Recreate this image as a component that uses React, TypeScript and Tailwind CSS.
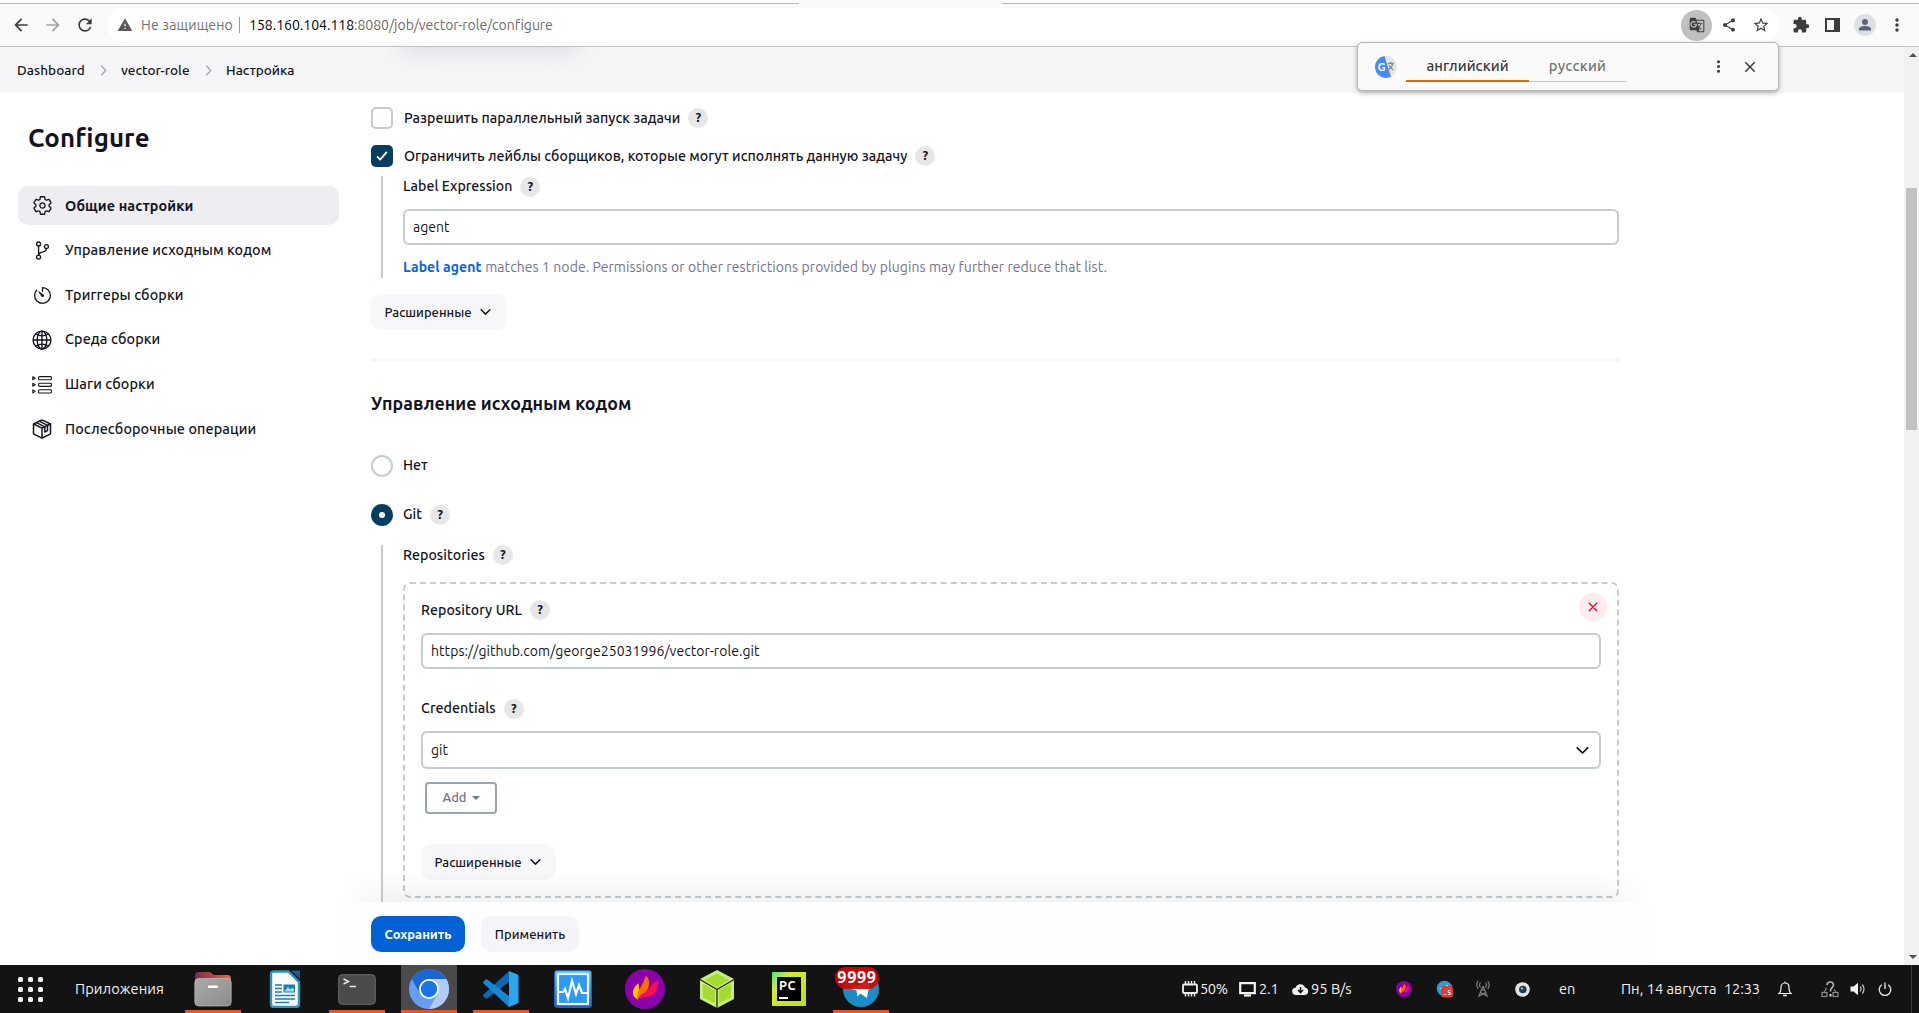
import type { ReactNode } from "react";
import {
  MdArrowBack,
  MdArrowForward,
  MdClose,
  MdExtension,
  MdGTranslate,
  MdMoreVert,
  MdRefresh,
  MdShare,
  MdStarBorder,
  MdWarning,
} from "react-icons/md";
import { IoGitBranchOutline, IoGlobeOutline, IoSettingsOutline, IoTimerOutline } from "react-icons/io5";

/* ---------- browser chrome ---------- */

function BrowserToolbar() {
  return (
    <header className="h-[47px] shrink-0 bg-[#fafafa] border-b border-[#c3c3c3] flex flex-col">
      <div className="h-1 flex">
        <div className="w-[799px] border-b border-[#b9b9b9]" />
        <div className="w-[203px]" />
        <div className="flex-1 border-b border-[#b9b9b9]" />
      </div>
      <div className="flex-1 flex items-center text-[14px]">
        <div className="w-[107px] pl-[11px] flex items-center gap-[12px] text-[#3c3c3c]">
          <MdArrowBack size={20} />
          <MdArrowForward size={20} className="text-[#a3a3a3]" />
          <MdRefresh size={20} />
        </div>
        <div className="w-[1672px] h-[34px] rounded-full bg-white flex items-center pl-[10px] pr-[4px]">
          <MdWarning size={16} className="text-[#5a5a5a]" />
          <span className="ml-[8px] text-[#707070] text-[14px] tracking-[0.19px]">Не защищено</span>
          <span className="ml-[6px] mr-[9px] w-px h-[16px] bg-[#9a9a9a]" />
          <span className="text-black">158.160.104.118</span>
          <span className="text-[#6b6b6b] tracking-[-0.03px]">:8080/job/vector-role/configure</span>
          <div className="ml-auto flex items-center text-[#3f3f3f]">
            <span className="size-[31px] rounded-full bg-[#c0c0c0] grid place-items-center">
              <MdGTranslate size={16} />
            </span>
            <MdShare size={16} className="ml-[9px]" />
            <MdStarBorder size={18} className="ml-[15px] mr-[5px]" />
          </div>
        </div>
        <div className="ml-[13px] flex items-center text-[#3c3c3c]">
          <MdExtension size={18} />
          <span className="ml-[15px] w-[15px] h-[14px] border-2 border-r-[6px] border-[#3c3c3c]" />
          <span className="ml-[14px] size-[22px] rounded-full bg-[#dde1e6] grid place-items-center">
            <svg viewBox="0 0 14 14" className="size-[14px]" fill="#5a6478">
              <circle cx="7" cy="4" r="3" />
              <path d="M1 12.5V11c0-2 3-3 6-3s6 1 6 3v1.500z" />
            </svg>
          </span>
          <MdMoreVert size={20} className="ml-[11px]" />
        </div>
      </div>
    </header>
  );
}

function TranslatePopup() {
  return (
    <div className="absolute left-[1357px] top-[42px] w-[422px] h-[49px] rounded-[5px] bg-[#fafafa] border border-[#b5b5b5] shadow-[0_2px_5px_rgba(0,0,0,0.3)] z-20 flex items-center pl-[17px] text-[14.800px] font-medium">
      <svg viewBox="0 0 22 22" className="size-[22px]">
        <circle cx="11" cy="11" r="11" fill="#e6e6e6" />
        <path d="M9.500 0.100a11 11 0 0 0 1.500 21.900l5-.9z" fill="#4a8af4" />
        <text x="2.800" y="14.800" fontSize="10.500" fontWeight="700" fill="#fff" fontFamily="Lato">G</text>
        <path d="M12.800 7.500h6M15.800 6v1.500M18 7.500c-.6 3-2.500 4.800-4.200 6M14.200 9.500c.8 2 2.400 3.400 4.200 4.500" fill="none" stroke="#7f9090" strokeWidth="1.300" />
      </svg>
      <div className="ml-[9px] w-[123px] h-[29px] mt-[2px] border-b-[2px] border-[#d56e0c] flex items-center justify-center text-[#3a3a3a] tracking-[0.05px]">
        английский
      </div>
      <div className="w-[97px] h-[29px] mt-[2px] pb-px border-b border-[#c4c4c4] flex items-center justify-center text-[#757575] tracking-[0.200px]">
        русский
      </div>
      <MdMoreVert size={19} className="ml-[83px] text-[#3c3c3c]" />
      <MdClose size={18} className="ml-[13px] text-[#3c3c3c]" />
    </div>
  );
}

/* ---------- Jenkins page ---------- */

function Crumb() {
  return (
    <svg viewBox="0 0 6 10" className="w-[7px] h-[11px]" fill="none" stroke="#a5a5b8" strokeWidth="1.300">
      <path d="M1 .7 5 5 1 9.300" />
    </svg>
  );
}

function Breadcrumbs() {
  return (
    <div className="h-[46px] shrink-0 bg-[#f6f6f9] relative flex items-center pl-[17px] text-[13.600px] font-medium overflow-hidden">
      <div className="absolute left-[400px] -top-[24px] w-[180px] h-[28px] rounded-full bg-[#d9d9e0] blur-[12px]" />
      <span className="w-[83px] tracking-[0.05px]">Dashboard</span>
      <Crumb />
      <span className="ml-[14px] w-[84px]">vector-role</span>
      <Crumb />
      <span className="ml-[14px]">Настройка</span>
    </div>
  );
}

function StepsIcon() {
  return (
    <svg viewBox="0 0 20 20" className="size-[20px]" fill="none" stroke="#14141f" strokeWidth="1.100">
      {[3.2, 9.8, 16.4].map((y) => (
        <g key={y}>
          <path d={`M.8 ${y - 1.5}v3l2.400-1.500z`} strokeLinejoin="round" />
          <rect x="6.500" y={y - 1.6} width="13" height="3.200" rx="1.300" />
        </g>
      ))}
    </svg>
  );
}

function PackageIcon() {
  return (
    <svg viewBox="0 0 20 20" className="size-[20px]" fill="none" stroke="#14141f" strokeWidth="1.500" strokeLinejoin="round">
      <path d="M10 .9 18.500 5v9.800L10 19.200 1.500 14.800V5z" />
      <path d="M1.500 5 10 9.200 18.500 5M10 9.200v10" />
      <path d="M4.500 3.700l8.300 4.200v5.200l2.700-1.400V6.300L7.200 2.200" />
    </svg>
  );
}

const NAV: { label: string; icon: ReactNode }[] = [
  { label: "Общие настройки", icon: <IoSettingsOutline size={21} /> },
  { label: "Управление исходным кодом", icon: <IoGitBranchOutline size={21} /> },
  { label: "Триггеры сборки", icon: <IoTimerOutline size={21} /> },
  { label: "Среда сборки", icon: <IoGlobeOutline size={22} /> },
  { label: "Шаги сборки", icon: <StepsIcon /> },
  { label: "Послесборочные операции", icon: <PackageIcon /> },
];

function Sidebar() {
  return (
    <aside className="w-[371px] shrink-0 pl-[18px]">
      <h1 className="mt-[28px] ml-[10px] h-[34px] leading-[34px] text-[25.800px] font-semibold tracking-[0.1px]">Configure</h1>
      <nav className="mt-[31px] flex flex-col gap-[5.800px]">
        {NAV.map((n, i) => (
          <a
            key={n.label}
            className={
              i === 0
                ? "w-[321px] h-[39px] rounded-[10px] bg-[#ededf2] flex items-center pl-[13px] font-semibold text-[14.400px] tracking-[0.1px]"
                : "w-[321px] h-[39px] rounded-[10px] flex items-center pl-[13px] font-medium text-[14.400px] tracking-[0.1px]"
            }
          >
            <span className="w-[22px] mr-[12px] grid place-items-center">{n.icon}</span>
            <span className={i < 3 ? "pt-[2px]" : ""}>{n.label}</span>
          </a>
        ))}
      </nav>
    </aside>
  );
}

function Help() {
  return (
    <span className="ml-[8px] size-[20px] pb-px rounded-full bg-[#e7e7e8] grid place-items-center text-[13px] leading-none font-semibold">
      ?
    </span>
  );
}

function Chevron({ className }: { className: string }) {
  return (
    <svg viewBox="0 0 12 8" className={className} fill="none" stroke="#14141f" strokeWidth="1.600" strokeLinecap="round" strokeLinejoin="round">
      <path d="M1.200 1.500 6 6.300l4.800-4.800" />
    </svg>
  );
}

function AdvancedButton({ className }: { className: string }) {
  return (
    <button className={"w-[135px] h-[36px] rounded-[10px] bg-[#f7f7f9] flex items-center pl-[13.500px] text-[13px] font-medium " + className}>
      <span className="pt-[2px]">Расширенные</span>
      <Chevron className="ml-[9px] w-[11px] h-[8px]" />
    </button>
  );
}

function ConfigForm() {
  return (
    <main className="w-[1248px] text-[14.200px] font-medium flex flex-col">
      <div className="mt-[14px] h-[22px] flex items-center">
        <span className="size-[22px] rounded-[5px] border-2 border-[#c3ccd1]" />
        <span className="ml-[11px] pt-[2px] tracking-[0.04px]">Разрешить параллельный запуск задачи</span>
        <Help />
      </div>
      <div className="mt-[16px] h-[22px] flex items-center">
        <span className="size-[22px] rounded-[5px] bg-[#063e62] grid place-items-center">
          <svg viewBox="0 0 12 12" className="size-[12px]" fill="none" stroke="#fff" strokeWidth="1.800" strokeLinecap="round" strokeLinejoin="round">
            <path d="M1.500 6.800 4.200 9.600 10.400 2.400" />
          </svg>
        </span>
        <span className="ml-[11px] pt-[2px] tracking-[0.04px]">Ограничить лейблы сборщиков, которые могут исполнять данную задачу</span>
        <Help />
      </div>

      <section className="mt-[9px] ml-[10px] h-[102px] border-l-2 border-[#c3ccd1] pl-[20px]">
        <div className="h-[22px] flex items-center">
          <span className="pb-px">Label Expression</span>
          <Help />
        </div>
        <div className="mt-[11px] h-[36px] rounded-[6px] border-2 border-[#c3ccd1] flex items-center px-[8px] text-[14px] font-normal">agent</div>
        <div className="mt-[11px] h-[22px] flex items-center gap-[3.500px] text-[14px]">
          <span className="font-bold text-[#0067d9] tracking-[0.1px]">Label agent</span>
          <span className="font-normal text-[#73738c] tracking-[0.075px]">
            matches 1 node. Permissions or other restrictions provided by plugins may further reduce that list.
          </span>
        </div>
      </section>

      <AdvancedButton className="mt-[16px]" />
      <hr className="mt-[29px] h-[2px] border-0 bg-[#f3f3f6]" />
      <h2 className="mt-[30px] h-[24px] leading-[24px] text-[17.800px] font-semibold tracking-[0.06px]">Управление исходным кодом</h2>

      <div className="mt-[40px] h-[22px] flex items-center">
        <span className="size-[22px] rounded-full border-2 border-[#c3ccd1]" />
        <span className="ml-[10px]">Нет</span>
      </div>
      <div className="mt-[27px] h-[22px] flex items-center">
        <span className="size-[22px] rounded-full bg-[#063e62] grid place-items-center">
          <span className="size-[6px] rounded-full bg-white" />
        </span>
        <span className="ml-[10px]">Git</span>
        <Help />
      </div>

      <section className="mt-[19px] ml-[10px] h-[357px] border-l-2 border-[#c3ccd1] pl-[20px]">
        <div className="h-[20px] flex items-center">
          <span className="pt-[2px] tracking-[0.04px]">Repositories</span>
          <Help />
        </div>
        <div className="mt-[17px] h-[316px] rounded-[7px] border-2 border-dashed border-[#c3ccd1] px-[16px] relative">
          <button className="absolute right-[10px] top-[9px] size-[28px] rounded-full bg-[#fdebee] grid place-items-center">
            <svg viewBox="0 0 10 10" className="size-[10px]" stroke="#e6002e" strokeWidth="1.300" strokeLinecap="round">
              <path d="M1.300 1.300l7.400 7.400M8.700 1.300 1.300 8.700" />
            </svg>
          </button>
          <div className="mt-[16px] h-[20px] flex items-center">
            <span className="pt-[2px] tracking-[0.04px]">Repository URL</span>
            <Help />
          </div>
          <div className="mt-[13px] h-[36px] rounded-[6px] border-2 border-[#c3ccd1] flex items-center px-[8px] text-[14px] font-normal tracking-[0.06px]">
            https://github.com/george25031996/vector-role.git
          </div>
          <div className="mt-[30px] h-[20px] flex items-center">
            <span className="tracking-[0.05px]">Credentials</span>
            <Help />
          </div>
          <div className="mt-[12px] h-[38px] rounded-[6px] border-2 border-[#c3ccd1] flex items-center justify-between pl-[8px] pr-[10px] text-[14px] font-normal">
            git
            <Chevron className="w-[13px] h-[9px]" />
          </div>
          <button className="mt-[13px] ml-[4px] w-[72px] h-[32px] rounded-[4px] border-2 border-[#9aa6ad] flex items-center justify-center gap-[5px] text-[13px] text-[#73738c]">
            Add
            <span className="border-x-4 border-t-4 border-x-transparent border-t-[#73738c]" />
          </button>
          <AdvancedButton className="mt-[30px]" />
        </div>
      </section>
    </main>
  );
}

function BottomBar() {
  return (
    <div className="absolute left-[371px] bottom-0 w-[1248px] h-[63px]">
      <div className="absolute -left-[31px] -top-[32px] w-[1310px] h-[32px] bg-linear-to-b from-transparent to-black/5 mask-x-from-[96%] mask-x-to-100%" />
      <div className="absolute -left-[31px] top-0 w-[1310px] h-[63px] bg-[#fefeff]" />
      <div className="relative pt-[14px] flex gap-[16px] text-[13px]">
        <button className="w-[94px] h-[36px] pt-[2px] rounded-[10px] bg-[#0062d6] text-white font-bold">Сохранить</button>
        <button className="w-[98px] h-[36px] pt-[2px] rounded-[10px] bg-[#f5f5f9] font-medium tracking-[0.05px]">Применить</button>
      </div>
    </div>
  );
}

function Scrollbar() {
  return (
    <div className="w-[15px] bg-[#f1f1f1] flex flex-col items-center">
      <span className="mt-[6px] ml-[2px] border-x-4 border-b-4 border-x-transparent border-b-[#505050]" />
      <span className="mt-[131px] w-[11px] h-[242px] bg-[#c1c1c1]" />
      <span className="mt-auto mb-[6px] ml-[2px] border-x-4 border-t-4 border-x-transparent border-t-[#505050]" />
    </div>
  );
}

/* ---------- desktop panel ---------- */

function FolderIcon() {
  return (
    <svg viewBox="0 0 38 36" className="w-[38px] h-[36px]">
      <defs>
        <linearGradient id="fold" x1="0" x2="1"><stop offset="0" stopColor="#7a2a52" /><stop offset="1" stopColor="#ee6a33" /></linearGradient>
        <linearGradient id="foldFront" x1="0" x2="1" y1="0" y2="1"><stop offset="0" stopColor="#ababab" /><stop offset="1" stopColor="#8b8b8b" /></linearGradient>
      </defs>
      <path d="M1 5q0-4 4-4h10q2 0 3 1.500T21 4h13q3 0 3 4v8H1z" fill="url(#fold)" />
      <rect x=".8" y="7.500" width="36.400" height="27.500" rx="4" fill="url(#foldFront)" stroke="#bdbdbd" strokeWidth=".7" />
      <rect x="14" y="14.500" width="10" height="2.600" rx=".8" fill="#fff" />
    </svg>
  );
}

function WriterIcon() {
  return (
    <svg viewBox="0 0 32 38" className="w-[32px] h-[38px]">
      <path d="M5 1.500h14.500L30 12v22q0 3-3 3H5q-3 0-3-3V4.500q0-3 3-3z" fill="#f8fcff" stroke="#2b92c4" strokeWidth="2.400" />
      <path d="M22 .5h9v8.500z" fill="#12628c" />
      <path d="M6 15h7M6 18.500h7M6 22h7M6 25.500h20M6 29h20M6 32.500h14" stroke="#1a7fb2" strokeWidth="1.500" />
      <rect x="14.500" y="14.500" width="11.500" height="8" fill="#1a7fb2" />
      <path d="M15.500 21.500l3.500-4.500 2.500 2.500 2-2 1.500 2v2z" fill="#a9dcf3" />
    </svg>
  );
}

function TerminalIcon() {
  return (
    <svg viewBox="0 0 38 31" className="w-[38px] h-[31px]">
      <rect x=".7" y=".7" width="36.600" height="29.600" rx="3.500" fill="#4b4b4b" stroke="#6a6a6a" />
      <path d="M5.500 5l5 2.500-5 2.500M11.500 12.500h6.500" fill="none" stroke="#e8e8e8" strokeWidth="1.400" />
    </svg>
  );
}

function ChromiumIcon() {
  return (
    <svg viewBox="0 0 40 40" className="size-[40px]">
      <circle cx="20" cy="20" r="20" fill="#669df6" />
      <path d="M2.700 10A20 20 0 0 1 37.300 10H20L11.340 25z" fill="#1967d2" />
      <path d="M37.300 10A20 20 0 0 1 20 40l8.660-15L20 10z" fill="#aecbfa" />
      <circle cx="20" cy="20" r="10" fill="#fff" />
      <circle cx="20" cy="20" r="8.200" fill="#1a73e8" />
    </svg>
  );
}

function CodeIcon() {
  return (
    <svg viewBox="0 0 36 36" className="size-[36px]">
      <path d="M26 0v11L4.500 27.300q-1 .7-2 0L.5 25.500q-1-1 0-2z" fill="#0a69b0" />
      <path d="M26 36V25L4.500 8.700q-1-.7-2 0L.5 10.500q-1 1 0 2z" fill="#1587d4" />
      <path d="M26 0l8.500 3.500q1 .5 1 1.500v26q0 1-1 1.500L26 36q-.500-.500 0-2z" fill="#2aa5f0" />
    </svg>
  );
}

function MonitorIcon() {
  return (
    <svg viewBox="0 0 38 38" className="size-[38px]">
      <defs><linearGradient id="mon" x1="0" x2="0" y1="0" y2="1"><stop offset="0" stopColor="#5bc8fb" /><stop offset="1" stopColor="#1b5fd6" /></linearGradient></defs>
      <rect x=".5" y=".5" width="37" height="37" rx="2.500" fill="url(#mon)" stroke="#2560b8" />
      <rect x="4" y="4" width="30" height="30" fill="#2e9af7" stroke="#f4faff" strokeWidth="2.200" />
      <path d="M5 22h4l2-3 3 9 4-17 4 13 3-9 3 8h5" fill="none" stroke="#fff" strokeWidth="2.200" />
    </svg>
  );
}

function FlameshotIcon({ className }: { className: string }) {
  return (
    <svg viewBox="0 0 40 40" className={className}>
      <circle cx="20" cy="20" r="20" fill="#8b00aa" />
      <path d="M8.500 27C7 22 9 18 13.500 14c.5 4 1 6 0 13-.5 1.500-1 3-1 4z" fill="#ffc400" />
      <path d="M12.500 31C11 24 15 20 17.500 15S20 9 21 6.500c3.500 4 4 8 2 13-2 5-7 6-10.500 11.500z" fill="#ff6f00" />
      <path d="M12.500 31c3-8 9-6 12.500-13 2-3 5-5 8.500-7-1 8-1 13-7 15.500-5 2-10 .5-14 4.500z" fill="#ff0a5c" />
    </svg>
  );
}

function CubeIcon() {
  return (
    <svg viewBox="0 0 36 40" className="w-[36px] h-[40px]">
      <path d="M18 1 35 10v20L18 39 1 30V10z" fill="#c6ee78" />
      <path d="M18 4.500 30 11l-12 7.500L6 11zM4 14.500l12 7V34L4 28.500zM32 14.500l-12 7V34l12-5.500z" fill="#a4dc32" />
      <path d="M1 10.500l17 10L35 10.500M18 20.500V39" fill="none" stroke="#1f2a12" strokeWidth="1.300" />
    </svg>
  );
}

function PyCharmIcon() {
  return (
    <div className="size-[34px] bg-linear-to-br from-[#21e07a] via-[#d6ea2a] via-30% to-[#b4e020] p-[5px]">
      <div className="size-[24px] bg-black text-white font-bold text-[12.500px] leading-[12px] pt-[2px] pl-[2px] tracking-[0.5px]">
        PC
        <div className="mt-[6px] w-[9px] h-[2px] bg-white" />
      </div>
    </div>
  );
}

function TelegramIcon() {
  return (
    <div className="relative size-[36px]">
      <svg viewBox="0 0 36 36" className="size-[36px]">
        <circle cx="18" cy="18" r="18" fill="#1c8cc6" />
        <path d="M7 17.500 27 9.500 24 27l-6.500-4.500-3 3-1-6z" fill="#fff" />
      </svg>
      <span className="absolute -left-[8px] -top-[4px] w-[44px] h-[22px] rounded-full bg-[#d60000]/90 text-white text-[16px] leading-[20px] font-bold text-center font-['Noto_Sans'] tracking-[0.7px]">
        9999
      </span>
    </div>
  );
}

const APPS: { name: string; icon: ReactNode; running?: boolean; active?: boolean }[] = [
  { name: "files", icon: <FolderIcon />, running: true },
  { name: "writer", icon: <WriterIcon /> },
  { name: "terminal", icon: <TerminalIcon />, running: true },
  { name: "chromium", icon: <ChromiumIcon />, running: true, active: true },
  { name: "code", icon: <CodeIcon />, running: true },
  { name: "monitor", icon: <MonitorIcon /> },
  { name: "flameshot", icon: <FlameshotIcon className="size-[40px]" /> },
  { name: "cube", icon: <CubeIcon /> },
  { name: "pycharm", icon: <PyCharmIcon /> },
  { name: "telegram", icon: <TelegramIcon />, running: true },
];

function Tray() {
  return (
    <div className="ml-auto flex items-center text-[14.667px] text-[#f0f0f0]">
      <svg viewBox="0 0 16 16" className="size-[16px]" fill="none" stroke="#f0f0f0" strokeWidth="1.800">
        <rect x="1" y="3.500" width="14" height="8.500" rx="1" />
        <path d="M3.500 0v3M6.500 0v3M9.500 0v3M12.500 0v3M3.500 13v2.500M6.500 13v2.500M9.500 13v2.500M12.500 13v2.500" strokeWidth="1.400" />
      </svg>
      <span className="ml-[2px] w-[39px] tracking-[-0.4px]">50%</span>
      <svg viewBox="0 0 17 15" className="w-[17px] h-[15px]" fill="none" stroke="#f0f0f0" strokeWidth="2.200">
        <path d="M1.200 1.200h14.600v10H1.200z" />
        <path d="M5 13.500h7" />
      </svg>
      <span className="ml-[3px] w-[33px] tracking-[-0.2px]">2.1</span>
      <svg viewBox="0 0 17 13" className="w-[17px] h-[13px]">
        <path d="M4 12a3.600 3.600 0 0 1-.4-7.200A5 5 0 0 1 13 4.500a3.800 3.800 0 0 1 0 7.500z" fill="#f0f0f0" />
        <path d="M8.500 4v5M6 7l2.500 2.600L11 7" fill="none" stroke="#131313" strokeWidth="1.500" />
      </svg>
      <span className="ml-[2px] w-[85px]">95 B/s</span>
      <FlameshotIcon className="size-[16px]" />
      <svg viewBox="0 0 18 18" className="ml-[24px] size-[18px]">
        <circle cx="8.500" cy="8.500" r="7.800" fill="#2a9bd6" />
        <path d="M3 8.500l9-3.500-.5 4H6z" fill="#fff" />
        <rect x="5" y="6" width="12" height="11.500" rx="3" fill="#e53935" />
        <path d="M7.500 14.500h1M9.500 14.500h1M12 14.500h2.200v-2h-2v-2h2.200" stroke="#fff" fill="none" strokeWidth=".9" />
      </svg>
      <svg viewBox="0 0 16 18" className="ml-[21px] w-[16px] h-[18px]" fill="none" stroke="#8a8a8a" strokeWidth="1.100">
        <path d="M8 6 3.500 17M8 6l4.500 11M6.500 10h3M5.500 12.500l5.500 3M10.500 12.500l-5.500 3" />
        <path d="M5.500 2.500a4 4 0 0 0 0 5M10.500 2.500a4 4 0 0 1 0 5M3.300 1a6.500 6.500 0 0 0 0 8M12.700 1a6.500 6.500 0 0 1 0 8" />
      </svg>
      <svg viewBox="0 0 16 16" className="ml-[24px] size-[15px]">
        <circle cx="8" cy="8" r="7.800" fill="#e3e3e3" />
        <circle cx="8.300" cy="8" r="4" fill="#1d3a4e" />
        <circle cx="7.500" cy="6.800" r="1.300" fill="#7fc0e8" />
      </svg>
      <span className="ml-[29px] w-[62px]">en</span>
      <span className="w-[103px]">Пн, 14 августа</span>
      <span className="w-[54px] tracking-[-0.15px]">12:33</span>
      <svg viewBox="0 0 14 16" className="w-[14px] h-[16px]" fill="none" stroke="#f0f0f0" strokeWidth="1.200">
        <path d="M1 12.500c2-1.500 2-3 2-6C3 4 4.500 2 7 2s4 2 4 4.500c0 3 0 4.500 2 6zM7 2V.5" />
        <path d="M5.200 14.500h3.600" strokeWidth="1.800" />
      </svg>
      <svg viewBox="0 0 18 17" className="ml-[29px] w-[18px] h-[17px]" fill="none" stroke="#8d8d8d" strokeWidth="1.200">
        <path d="M6 4c0-4 6.500-4 6.500 0 0 2.500-3 2.500-3 5.500v1" stroke="#b5b5b5" strokeWidth="1.600" />
        <path d="M5 6.500v2L3 11M13 8.500l2 2.500" />
        <rect x="1" y="11.500" width="5" height="4" />
        <rect x="12" y="11.500" width="5" height="4" />
        <path d="M9.500 13v2.500" stroke="#f0f0f0" strokeWidth="1.800" />
      </svg>
      <svg viewBox="0 0 16 14" className="ml-[11px] w-[16px] h-[14px]">
        <path d="M.5 4.500h3L8 .8v12.400L3.500 9.500h-3z" fill="#f0f0f0" />
        <path d="M10 4.500a3.500 3.500 0 0 1 0 5M12.200 2.500a6.500 6.500 0 0 1 0 9" fill="none" stroke="#c4c4c4" strokeWidth="1.200" />
      </svg>
      <svg viewBox="0 0 14 15" className="ml-[12px] w-[14px] h-[15px]" fill="none" stroke="#e8e8e8" strokeWidth="1.300">
        <path d="M7 .5v6.500M3.800 2.800a5.800 5.800 0 1 0 6.400 0" />
      </svg>
      <span className="ml-[19px] mr-[7px] w-px h-[48px] bg-[#3a3a3a]" />
    </div>
  );
}

function Taskbar() {
  return (
    <footer className="h-[48px] shrink-0 bg-[#131313] flex items-center">
      <div className="ml-[18px] grid grid-cols-3 gap-[5px]">
        {Array.from({ length: 9 }, (_, i) => (
          <span key={i} className="size-[5px] rounded-[1.500px] bg-[#efefef]" />
        ))}
      </div>
      <span className="ml-[32px] w-[110px] text-[14.667px] text-[#f0f0f0] tracking-[0.08px]">Приложения</span>
      <div className="flex gap-[16px] h-full">
        {APPS.map((a) => (
          <div
            key={a.name}
            className={a.active ? "relative w-[56px] h-full bg-[#4a4a4a] grid place-items-center" : "relative w-[56px] h-full grid place-items-center"}
          >
            {a.icon}
            {a.running && <span className="absolute inset-x-0 bottom-0 h-[3px] bg-[#e95420]" />}
          </div>
        ))}
      </div>
      <Tray />
    </footer>
  );
}

export default function App() {
  return (
    <div className="relative w-[1919px] h-[1013px] overflow-hidden flex flex-col bg-white text-[#14141f] font-[Ubuntu,'Noto_Sans',sans-serif]">
      <BrowserToolbar />
      <TranslatePopup />
      <div className="h-[918px] flex">
        <div className="relative w-[1904px] h-full overflow-hidden flex flex-col">
          <Breadcrumbs />
          <div className="flex">
            <Sidebar />
            <ConfigForm />
          </div>
          <BottomBar />
        </div>
        <Scrollbar />
      </div>
      <Taskbar />
    </div>
  );
}
